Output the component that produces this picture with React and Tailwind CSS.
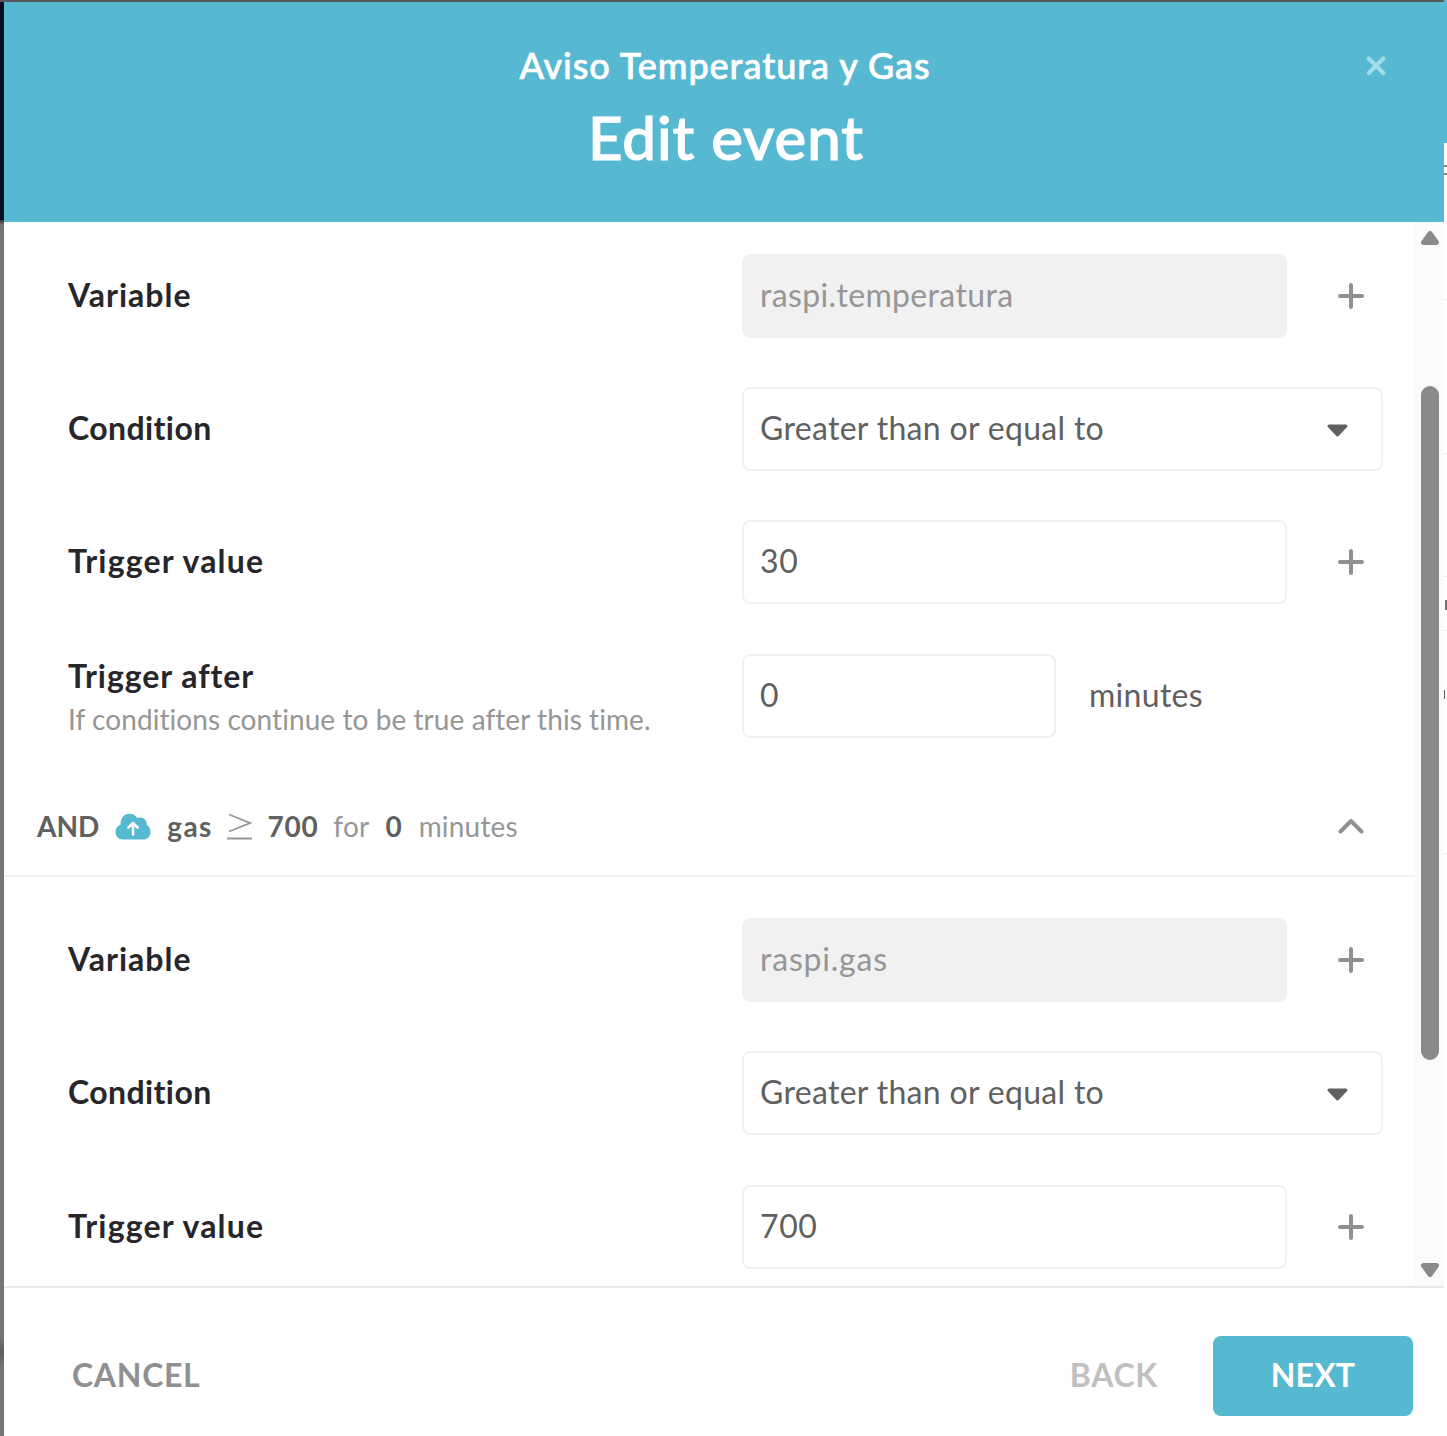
function PlusIcon() {
  return (
    <svg width="26" height="26" viewBox="0 0 26 26" className="ml-[51px] shrink-0" aria-hidden="true">
      <path d="M13 2v22M2 13h22" stroke="#909090" strokeWidth="4" strokeLinecap="round" fill="none" />
    </svg>
  );
}

function Row({ label, labelClass, children }) {
  return (
    <div className="flex h-[84px] items-center">
      <div className="w-[674px] shrink-0 pb-[2px]">
        <span className={`block whitespace-nowrap text-[32px] leading-[44px] font-bold text-[#26262b] ${labelClass}`}>{label}</span>
      </div>
      {children}
    </div>
  );
}

function Input({ value, disabled, width = "w-[545px]", textClass = "tracking-[0.6px]" }) {
  return (
    <div
      className={`flex h-[84px] shrink-0 items-center rounded-lg border-2 border-[#f1f1f1] pb-[2px] pl-[16px] text-[32px] leading-[44px] ${width} ${
        disabled ? "bg-[#f1f1f1] text-[#969696]" : "bg-white text-[#606060]"
      }`}
    >
      <span className={`whitespace-nowrap ${textClass}`}>{value}</span>
    </div>
  );
}

function Select({ value }) {
  return (
    <div className="flex h-[84px] w-[641px] shrink-0 items-center justify-between rounded-lg border-2 border-[#f1f1f1] bg-white pr-[33px] pb-[2px] pl-[16px] text-[32px] leading-[44px] text-[#606060]">
      <span className="whitespace-nowrap tracking-[0.31px]">{value}</span>
      <svg width="21" height="13" viewBox="0 0 21 13" className="mt-[5px]" aria-hidden="true">
        <path d="M2 2h17L10.500 11z" fill="#606060" stroke="#606060" strokeWidth="3" strokeLinejoin="round" />
      </svg>
    </div>
  );
}

function CloudIcon() {
  return (
    <svg width="36" height="27" viewBox="0 0 36 27" className="ml-[16px]" aria-hidden="true">
      <path
        d="M8 26.500C3.500 26.500.500 23 .500 19c0-3.400 2-6.200 5-7.200C5.300 5.300 9 .800 14.500.800c3.300 0 6 1.500 7.800 4.200 5-1.700 10 1.500 9.500 7 2.300 1.200 3.700 3.700 3.700 6.700 0 4.700-3 7.800-7.500 7.800z"
        fill="#56b8d1"
      />
      <path d="M18 21.500V11M13.300 14.700L18 10l4.700 4.700" fill="none" stroke="#fff" strokeWidth="2.600" strokeLinecap="round" strokeLinejoin="round" />
    </svg>
  );
}

export default function App() {
  return (
    <div className="flex h-[1436px] w-[1447px] overflow-hidden bg-white font-['Lato','Open_Sans',sans-serif]">
      <div className="flex w-[4px] shrink-0 flex-col">
        <div className="h-[2px] bg-[#57595c]" />
        <div className="h-[218px] bg-[#050e20]" />
        <div className="h-[5px] bg-linear-to-b from-[#333438] to-[#777573]" />
        <div className="h-[1113px] bg-[#777573]" />
        <div className="h-[28px] bg-linear-to-b from-[#777573] via-[#5f5e5d] to-[#777573]" />
        <div className="grow bg-[#777573]" />
      </div>

      <div className="flex w-[1440px] shrink-0 flex-col">
        <header className="relative h-[222px] shrink-0 border-t-2 border-[#57595c] bg-[#56b8d1] text-center text-white">
          <h2 className="mt-[39px] pl-[2px] text-[36px] leading-[48px] font-medium tracking-[0.95px] [-webkit-text-stroke:0.7px_white]">Aviso Temperatura y Gas</h2>
          <h1 className="mt-[8px] pl-[4px] text-[60px] leading-[80px] font-medium tracking-[0.95px] [-webkit-text-stroke:1.2px_white]">Edit event</h1>
          <svg width="20" height="20" viewBox="0 0 20 20" className="absolute top-[54px] right-[58px]" aria-hidden="true">
            <path d="M2.800 2.500l14.500 14.500M17.300 2.500l-14.500 14.500" stroke="#a5dcea" strokeWidth="4.200" strokeLinecap="round" fill="none" />
          </svg>
        </header>

        <div className="flex h-[1064px] shrink-0">
          <main className="h-[1064px] w-[1411px] shrink-0 overflow-hidden pt-[32px]">
            <div className="flex flex-col gap-[49.150px] pl-[64px]">
              <Row label="Variable" labelClass="tracking-[1px]">
                <Input value="raspi.temperatura" disabled textClass="tracking-[0.35px]" />
                <PlusIcon />
              </Row>
              <Row label="Condition" labelClass="tracking-[0.4px]">
                <Select value="Greater than or equal to" />
              </Row>
              <Row label="Trigger value" labelClass="tracking-[1.2px]">
                <Input value="30" />
                <PlusIcon />
              </Row>
              <div className="mt-[0.500px] flex h-[84px] items-center">
                <div className="w-[674px] shrink-0 pt-[2px] whitespace-nowrap">
                  <div className="text-[32px] leading-[44px] font-bold tracking-[0.95px] text-[#26262b]">Trigger after</div>
                  <div className="text-[28px] leading-[42px] tracking-[0.07px] text-[#969696]">If conditions continue to be true after this time.</div>
                </div>
                <Input value="0" width="w-[314px]" />
                <span className="ml-[33px] pb-[2px] text-[32px] leading-[44px] tracking-[0.3px] text-[#606060]">minutes</span>
              </div>
            </div>

            <div className="mt-[40px] flex h-[99px] items-center border-b-2 border-[#f1f1f1] pl-[33px] text-[28px] leading-[38px] whitespace-nowrap text-[#969696]">
              <span className="font-bold text-[#606060]">AND</span>
              <CloudIcon />
              <span className="ml-[16px] font-bold tracking-[1.300px] text-[#606060]">gas</span>
              <svg width="25" height="27" viewBox="0 0 25 27" className="ml-[14px]" aria-hidden="true">
                <path d="M2 1.500L23 10 2 18.500M0 25.500h25" fill="none" stroke="#969696" strokeWidth="1.800" />
              </svg>
              <span className="ml-[16px] font-bold tracking-[0.700px] text-[#606060]">700</span>
              <span className="ml-[15px] tracking-[0.200px]">for</span>
              <span className="ml-[16px] font-bold text-[#606060]">0</span>
              <span className="ml-[17px] tracking-[0.200px]">minutes</span>
              <svg width="26" height="16" viewBox="0 0 26 16" className="mr-[51px] ml-auto" aria-hidden="true">
                <path d="M2.500 13.500L13 3l10.500 10.500" fill="none" stroke="#909090" strokeWidth="4" strokeLinecap="round" strokeLinejoin="round" />
              </svg>
            </div>

            <div className="flex flex-col gap-[49.400px] pt-[41px] pl-[64px]">
              <Row label="Variable" labelClass="tracking-[1px]">
                <Input value="raspi.gas" disabled textClass="tracking-[0.8px]" />
                <PlusIcon />
              </Row>
              <Row label="Condition" labelClass="tracking-[0.4px]">
                <Select value="Greater than or equal to" />
              </Row>
              <Row label="Trigger value" labelClass="tracking-[1.2px]">
                <Input value="700" />
                <PlusIcon />
              </Row>
            </div>
          </main>

          <div className="flex w-[29px] shrink-0 flex-col items-center bg-[#fbfbfb] pt-[9px] pl-px">
            <svg width="18" height="14" viewBox="0 0 18 14" aria-hidden="true">
              <path d="M9 2.500l6.500 9h-13z" fill="#8a8a8a" stroke="#8a8a8a" strokeWidth="5" strokeLinejoin="round" />
            </svg>
            <div className="mt-[141px] h-[674px] w-[18px] rounded-full bg-[#8a8a8a]" />
            <svg width="18" height="14" viewBox="0 0 18 14" className="mt-[203px]" aria-hidden="true">
              <path d="M9 11.500l-6.500-9h13z" fill="#8a8a8a" stroke="#8a8a8a" strokeWidth="5" strokeLinejoin="round" />
            </svg>
          </div>
        </div>

        <footer className="flex h-[150px] shrink-0 items-start border-t-2 border-[#e8e8e8] pt-[48px] pr-[31px] pl-[68px] text-[32px] leading-[78px] font-bold">
          <button className="h-[80px] pb-[2px] tracking-[0.7px] text-[#909090]">CANCEL</button>
          <button className="mr-[55px] ml-auto h-[80px] pb-[2px] tracking-[0.7px] text-[#c0c0c0]">BACK</button>
          <button className="h-[80px] w-[200px] rounded-lg bg-[#56b8d1] pb-[2px] tracking-[0.2px] text-white">NEXT</button>
        </footer>
      </div>

      <div className="flex w-[3px] shrink-0 flex-col">
        <div className="h-[143px] bg-[#56b8d1]" />
        <div className="mt-[22px] h-[2px] bg-[#8a8a8a]" />
        <div className="mt-[6px] h-[2px] bg-[#8a8a8a]" />
        <div className="mt-[124px] h-px bg-[#ececec]" />
        <div className="mt-[153px] h-px bg-[#ececec]" />
        <div className="mt-[122px] h-px bg-[#ececec]" />
        <div className="mt-[23px] ml-px h-[10px] bg-[#707070]" />
        <div className="mt-[20px] h-px bg-[#ececec]" />
        <div className="mt-[59px] h-[9px] w-px bg-[#606060]" />
        <div className="mt-[154px] h-px bg-[#ececec]" />
      </div>
    </div>
  );
}
